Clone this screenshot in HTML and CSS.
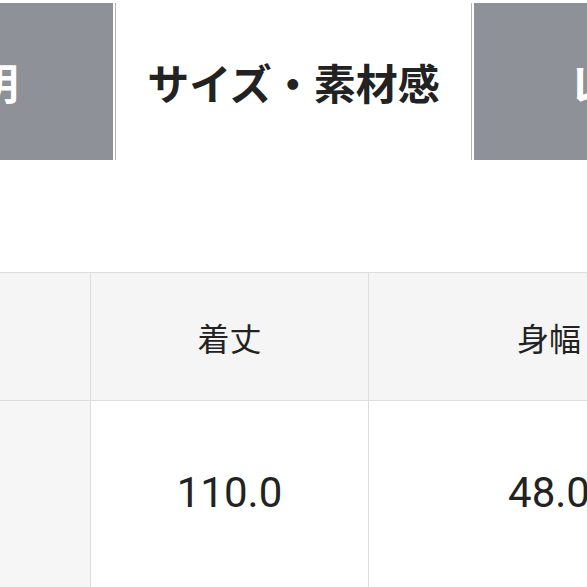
FILE: index.html
```html
<!DOCTYPE html>
<html lang="ja">
<head>
<meta charset="utf-8">
<title>サイズ・素材感</title>
<link rel="stylesheet" href="styles.css">
</head>
<body>
<div class="tabs">
  <div class="tab tab-inactive">商品説明</div>
  <div class="tab tab-active">サイズ・素材感</div>
  <div class="tab tab-inactive">レビュー</div>
</div>
<div class="size-table">
  <div class="cell head label"></div>
  <div class="cell head">着丈</div>
  <div class="cell head">身幅</div>
  <div class="cell head">袖丈</div>
  <div class="cell body label"></div>
  <div class="cell body num">110.0</div>
  <div class="cell body num">48.0</div>
  <div class="cell body num">60.0</div>
</div>
</body>
</html>
```
FILE: styles.css
```css
html, body {
  margin: 0;
  padding: 0;
  background: #fff;
  overflow: hidden;
}
body {
  width: 587px;
  height: 587px;
  font-family: "Noto Sans CJK JP", "Noto Sans", sans-serif;
}
.tabs {
  display: flex;
  gap: 2px;
  margin: 3px 0 0 -244px;
  height: 157px;
}
.tab {
  flex: 0 0 357px;
  box-sizing: border-box;
  display: flex;
  align-items: center;
  justify-content: center;
  font-size: 42px;
  font-weight: 700;
  white-space: nowrap;
}
.tab-inactive {
  background: #8e9197;
  color: #fff;
}
.tab-active {
  background: #fff;
  color: #222;
  border-left: 1px solid #b4b4b4;
  border-right: 1px solid #b4b4b4;
}
.size-table {
  margin-top: 112px;
  display: grid;
  grid-template-columns: 91px 278px 361px 300px;
  grid-template-rows: 128px 210px;
  border-top: 1px solid #dcdde0;
  width: 1030px;
}
.cell {
  box-sizing: border-box;
  border-right: 1px solid #dcdde0;
  border-bottom: 1px solid #dcdde0;
  display: flex;
  align-items: center;
  justify-content: center;
  color: #222;
}
.head {
  background: #f5f5f5;
  font-size: 32px;
  font-weight: 400;
}
.body {
  background: #fff;
  padding-bottom: 26px;
}
.body.label {
  background: #f6f6f6;
}
.num {
  font-family: Roboto, "Noto Sans", sans-serif;
  font-size: 42px;
}
```
